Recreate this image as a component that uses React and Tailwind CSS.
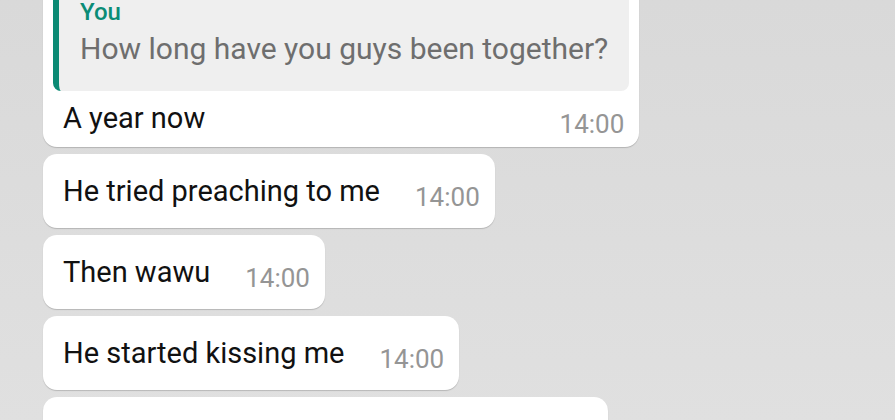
import React from "react";

const font = { fontFamily: "Roboto, 'Noto Sans', sans-serif" };

function Bubble({ text, time }) {
  return (
    <div className="w-fit rounded-[14px] bg-white shadow-[0_1px_1px_rgba(0,0,0,0.18)] flex items-end pl-[20px] pr-[15px] py-[19px]">
      <span className="text-[29px] leading-[36px] text-[#111]">{text}</span>
      <span className="ml-[35px] text-[26px] leading-[24px] text-[#959595]">{time}</span>
    </div>
  );
}

export default function App() {
  return (
    <div
      className="w-[895px] h-[420px] overflow-hidden bg-gradient-to-b from-[#d9d9d9] to-[#e0e0e0]"
      style={font}
    >
      <div className="pl-[43px] flex flex-col gap-[7px] mt-[-21px]">
        <div className="w-fit rounded-[14px] bg-white shadow-[0_1px_1px_rgba(0,0,0,0.18)] p-[10px] pb-[11px]">
          <div className="rounded-[8px] bg-[#efefef] border-l-[6px] border-[#0b8a74] pl-[21px] pr-[21px] pt-[8px] pb-[24px]">
            <div className="text-[24px] leading-[30px] font-medium text-[#0b8c76]">You</div>
            <div className="mt-[4px] text-[30px] leading-[36px] text-[#6e6e6e]">
              How long have you guys been together?
            </div>
          </div>
          <div className="flex items-end justify-between pl-[10px] pr-[5px] pt-[9px]">
            <span className="text-[29px] leading-[36px] text-[#111]">A year now</span>
            <span className="text-[26px] leading-[24px] text-[#959595]">14:00</span>
          </div>
        </div>
        <Bubble text="He tried preaching to me" time="14:00" />
        <Bubble text="Then wawu" time="14:00" />
        <Bubble text="He started kissing me" time="14:00" />
        <div className="w-[565px] rounded-[14px] bg-white shadow-[0_1px_1px_rgba(0,0,0,0.18)] pl-[20px] pr-[15px] py-[19px]">
          <span className="text-[29px] leading-[36px] text-[#111]">While we were in the kitchen cooking</span>
        </div>
      </div>
    </div>
  );
}
